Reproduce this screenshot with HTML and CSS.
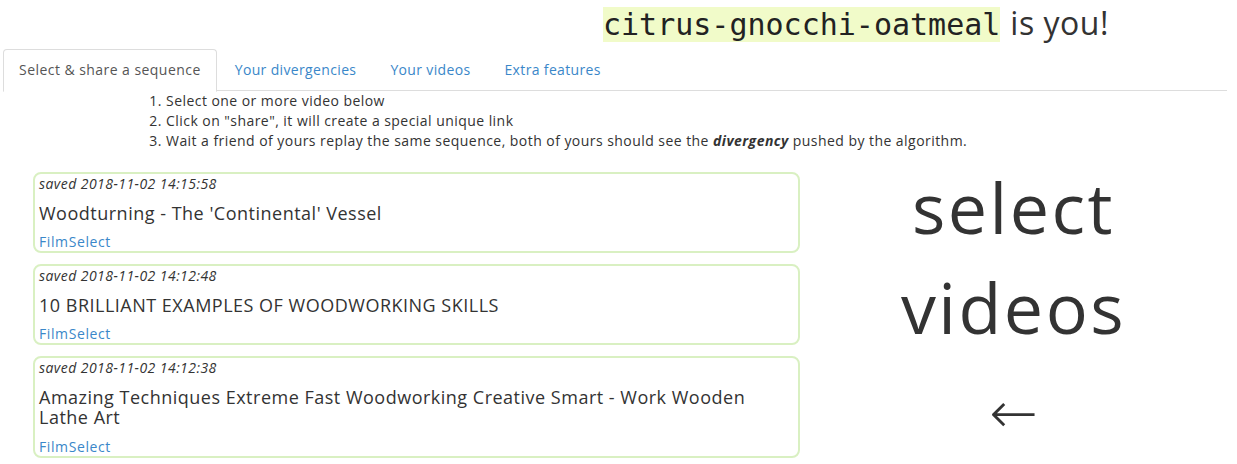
FILE: index.html
```html
<!DOCTYPE html>
<html>
<head>
<meta charset="utf-8">
<link rel="stylesheet" href="styles.css">
</head>
<body>
<div class="page">
  <header class="whoami">
    <span class="pseudo">citrus-gnocchi-oatmeal</span> <span class="isyou">is you!</span>
  </header>
  <nav class="tabs">
    <a class="tab active">Select &amp; share a sequence</a>
    <a class="tab">Your divergencies</a>
    <a class="tab">Your videos</a>
    <a class="tab">Extra features</a>
  </nav>
  <ol class="steps">
    <li>Select one or more video below</li>
    <li>Click on "share", it will create a special unique link</li>
    <li>Wait a friend of yours replay the same sequence, both of yours should see the <b><i>divergency</i></b> pushed by the algorithm.</li>
  </ol>
  <div class="main">
    <div class="cards">
      <div class="card">
        <div class="saved">saved 2018-11-02 14:15:58</div>
        <div class="title">Woodturning - The 'Continental' Vessel</div>
        <a class="link">FilmSelect</a>
      </div>
      <div class="card">
        <div class="saved">saved 2018-11-02 14:12:48</div>
        <div class="title">10 BRILLIANT EXAMPLES OF WOODWORKING SKILLS</div>
        <a class="link">FilmSelect</a>
      </div>
      <div class="card">
        <div class="saved">saved 2018-11-02 14:12:38</div>
        <div class="title">Amazing Techniques Extreme Fast Woodworking Creative Smart - Work Wooden Lathe Art</div>
        <a class="link">FilmSelect</a>
      </div>
    </div>
    <div class="hint">
      <div class="hint-line">select</div>
      <div class="hint-line">videos</div>
      <div class="hint-arrow">&larr;</div>
    </div>
  </div>
</div>
</body>
</html>
```

FILE: styles.css
```css
html, body {
  margin: 0;
  padding: 0;
  background: #fff;
}
body {
  font-family: "Open Sans", "Noto Sans", sans-serif;
  font-size: 14px;
  line-height: 20px;
  letter-spacing: 0.45px;
  color: #333;
}
.page {
  padding: 0 10px 0 3px;
}
.whoami {
  display: flex;
  align-items: baseline;
  margin: 5px 0 0 600px;
  height: 44px;
  line-height: 35px;
  white-space: nowrap;
  letter-spacing: 0;
}
.pseudo {
  font-family: "DejaVu Sans Mono", monospace;
  font-size: 30px;
  background: #f1fbc9;
  color: #222;
}
.isyou {
  font-size: 32px;
  color: #333;
  margin-left: 10px;
  letter-spacing: 0.5px;
}
.tabs {
  display: flex;
  border-bottom: 1px solid #ddd;
  height: 41px;
}
.tab {
  display: block;
  padding: 10px 15px;
  margin-right: 2px;
  line-height: 20px;
  border: 1px solid transparent;
  border-radius: 4px 4px 0 0;
  color: #3a87c9;
  height: 20px;
  letter-spacing: 0.35px;
}
.tab.active {
  color: #555;
  background: #fff;
  border-color: #ddd #ddd transparent #ddd;
  height: 21px;
  letter-spacing: 0.45px;
}
.steps {
  margin: 0;
  padding-left: 163px;
}
.steps b {
  font-weight: 700;
}
.main {
  display: flex;
  margin-top: 21px;
}
.cards {
  width: 767px;
  margin-left: 30px;
}
.card {
  border: 2px solid #d9f0c2;
  border-radius: 8px;
  padding: 0 4px;
  margin-bottom: 11px;
}
.saved {
  font-style: italic;
  line-height: 20px;
  color: #333;
}
.title {
  font-size: 18px;
  line-height: 20px;
  letter-spacing: 0.5px;
  margin: 9px 0;
  padding-right: 20px;
  color: #333;
}
.card:last-child .title {
  margin-bottom: 10px;
}
.link {
  display: block;
  color: #3a87c9;
  line-height: 19px;
  letter-spacing: 0.6px;
}
.hint {
  flex: 1;
  text-align: center;
  color: #333;
  margin-top: -15px;
}
.hint-line {
  font-size: 70px;
  line-height: 100px;
  letter-spacing: 2.5px;
}
.hint-arrow {
  font-family: "DejaVu Sans", sans-serif;
  font-weight: 300;
  font-size: 58px;
  line-height: 100px;
  margin-top: 6px;
  letter-spacing: 0;
}
```
